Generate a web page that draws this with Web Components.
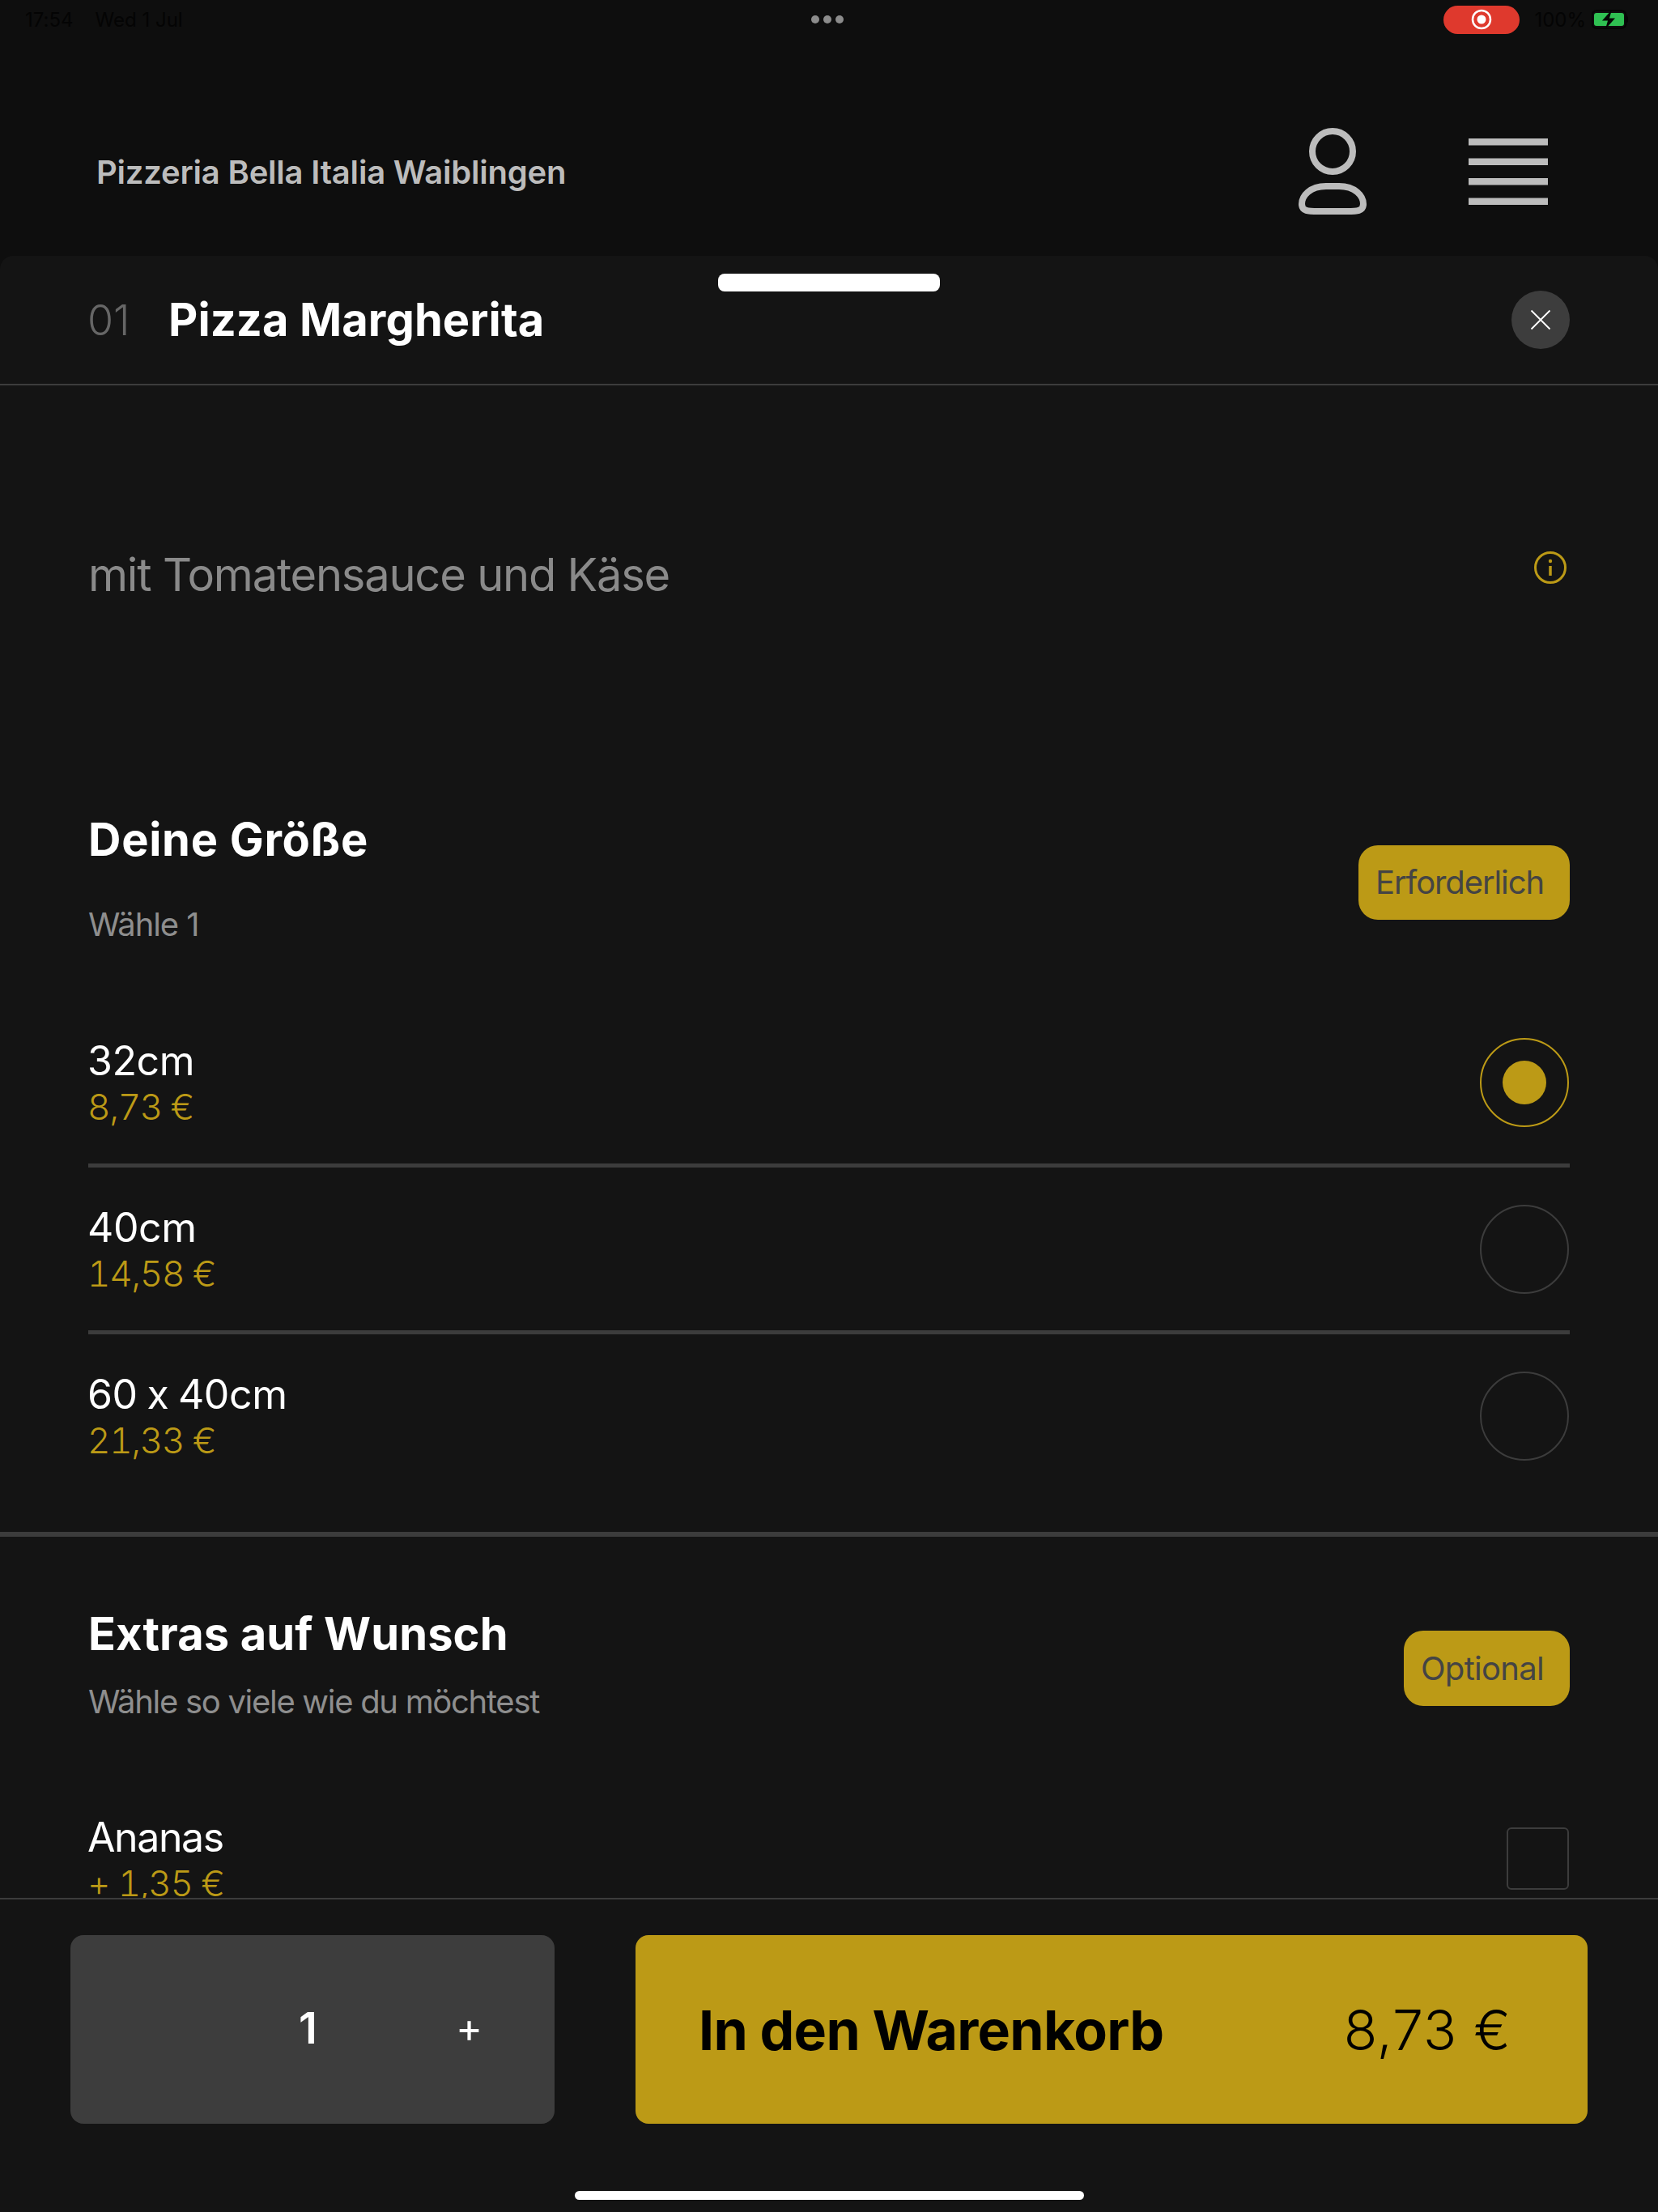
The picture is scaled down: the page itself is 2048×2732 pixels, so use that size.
<!DOCTYPE html>
<html lang="de">
<head>
<meta charset="utf-8">
<title>Pizza Margherita</title>
<style>
    html, body { margin: 0; background: #0e0e0e; }
    body {
        width: 2048px;
        height: 2732px;
        overflow: hidden;
        display: flex;
        flex-direction: column;
        font-family: Inter, "Liberation Sans", sans-serif;
        font-feature-settings: "calt" 0;
    }
</style>
</head>
<body>
<status-bar></status-bar>
<app-header name="Pizzeria Bella Italia Waiblingen"></app-header>
<item-sheet number="01" name="Pizza Margherita">
    <item-description>mit Tomatensauce und Käse</item-description>
    <option-group heading="Deine Größe" hint="Wähle 1" badge="Erforderlich" variant="size">
        <option-row label="32cm" price="8,73 €" kind="radio" checked></option-row>
        <option-row label="40cm" price="14,58 €" kind="radio"></option-row>
        <option-row label="60 x 40cm" price="21,33 €" kind="radio" last></option-row>
    </option-group>
    <option-group heading="Extras auf Wunsch" hint="Wähle so viele wie du möchtest" badge="Optional" variant="extras">
        <option-row label="Ananas" price="+ 1,35 €" kind="check" last></option-row>
    </option-group>
</item-sheet>
<order-bar qty="1" total="8,73 €"></order-bar>

<script>
class StatusBar extends HTMLElement {
    constructor() {
        super();
        this.attachShadow({ mode: "open" });
    }
    connectedCallback() {
        this.shadowRoot.innerHTML = `
            <style>
                :host {
                    display: grid;
                    grid-template-columns: 1fr auto 1fr;
                    align-items: center;
                    height: 48px;
                    flex: none;
                    padding: 0 36px 0 31px;
                    font-size: 24px;
                    color: #040404;
                }
                .left { display: flex; gap: 27px; }
                .dots { display: flex; gap: 5px; }
                .dots i { width: 10px; height: 10px; border-radius: 50%; background: #8c8c8c; }
                .right { display: flex; justify-content: flex-end; align-items: center; }
                .rec {
                    width: 94px;
                    height: 35px;
                    border-radius: 18px;
                    background: #df392d;
                    display: flex;
                    align-items: center;
                    justify-content: center;
                    margin-right: 18px;
                }
                .pct { margin-right: 7px; }
                svg { display: block; }
            </style>
            <div class="left"><span>17:54</span><span>Wed 1 Jul</span></div>
            <div class="dots"><i></i><i></i><i></i></div>
            <div class="right">
                <div class="rec">
                    <svg width="26" height="26" viewBox="0 0 26 26"><circle cx="13" cy="13" r="11" fill="none" stroke="#fff" stroke-width="2.5"/><circle cx="13" cy="13" r="5.5" fill="#fff"/></svg>
                </div>
                <span class="pct">100%</span>
                <svg width="46" height="24" viewBox="0 0 46 24">
                    <rect x="0.5" y="1" width="42" height="22" rx="6" fill="none" stroke="#050505" stroke-width="2"/>
                    <rect x="3" y="4" width="37" height="16" rx="3" fill="#2fc052"/>
                    <path d="M44 8.5v7" stroke="#050505" stroke-width="2"/>
                    <path d="M25 0L13 13.5h7L17 24l12-13.5h-7z" fill="#050505"/>
                </svg>
            </div>
        `;
    }
}
customElements.define("status-bar", StatusBar);

class AppHeader extends HTMLElement {
    constructor() {
        super();
        this.attachShadow({ mode: "open" });
    }
    connectedCallback() {
        this.shadowRoot.innerHTML = `
            <style>
                :host {
                    display: flex;
                    align-items: center;
                    flex: none;
                    height: 268px;
                    padding: 60px 136px 0 119px;
                    box-sizing: border-box;
                    color: #bcbcbc;
                }
                h1 { margin: 0 auto 0 0; font-size: 40px; font-weight: 600; letter-spacing: -0.2px; }
                svg { display: block; }
                .user { margin-right: 126px; }
            </style>
            <h1>${this.getAttribute("name")}</h1>
            <svg class="user" width="84" height="108" viewBox="0 0 84 108" fill="none" stroke="#bcbcbc" stroke-width="8">
                <circle cx="42" cy="29" r="25"/>
                <path d="M24 103H60C72 103 80 103 80 94C80 84 70 72 50 72H34C14 72 4 84 4 94C4 103 12 103 24 103Z"/>
            </svg>
            <svg width="98" height="82" viewBox="0 0 98 82" fill="#bcbcbc">
                <rect width="98" height="8.5"/>
                <rect y="24.5" width="98" height="8.5"/>
                <rect y="49" width="98" height="8.5"/>
                <rect y="73.5" width="98" height="8.5"/>
            </svg>
        `;
    }
}
customElements.define("app-header", AppHeader);

class ItemSheet extends HTMLElement {
    constructor() {
        super();
        this.attachShadow({ mode: "open" });
    }
    connectedCallback() {
        this.shadowRoot.innerHTML = `
            <style>
                :host {
                    display: block;
                    position: relative;
                    flex: none;
                    height: 2028px;
                    background: #141414;
                    border-radius: 16px 16px 0 0;
                    overflow: hidden;
                }
                .handle {
                    position: absolute;
                    left: 887px;
                    top: 22px;
                    width: 274px;
                    height: 22px;
                    border-radius: 8px;
                    background: #fff;
                }
                header {
                    display: flex;
                    align-items: center;
                    height: 158px;
                    padding: 0 109px 0 108px;
                    border-bottom: 2px solid #3c3c3c;
                }
                .num { font-size: 52px; color: #666; font-weight: 300; width: 100px; }
                h2 { margin: 0 auto 0 0; font-size: 56px; font-weight: 700; color: #fff; letter-spacing: 0.1px; }
                .close {
                    width: 72px;
                    height: 72px;
                    border-radius: 50%;
                    background: #3d3d3d;
                    display: flex;
                    align-items: center;
                    justify-content: center;
                }
                svg { display: block; }
            </style>
            <div class="handle"></div>
            <header>
                <span class="num">${this.getAttribute("number")}</span>
                <h2>${this.getAttribute("name")}</h2>
                <div class="close">
                    <svg width="26" height="26" viewBox="0 0 26 26" stroke="#fff" stroke-width="1.8"><path d="M1.5 1.5l23 23M24.5 1.5l-23 23"/></svg>
                </div>
            </header>
            <slot></slot>
        `;
    }
}
customElements.define("item-sheet", ItemSheet);

class ItemDescription extends HTMLElement {
    constructor() {
        super();
        this.attachShadow({ mode: "open" });
    }
    connectedCallback() {
        this.shadowRoot.innerHTML = `
            <style>
                :host {
                    display: flex;
                    justify-content: space-between;
                    align-items: center;
                    height: 464px;
                    padding: 0 109px;
                }
                p { margin: 3px 0 0; font-size: 56px; color: #8a8a8a; letter-spacing: -1.2px; }
                svg { display: block; margin: 0 4px 15px 0; }
            </style>
            <p><slot></slot></p>
            <svg width="40" height="40" viewBox="0 0 40 40" fill="none" stroke="#bc9a16">
                <circle cx="20" cy="20" r="18.5" stroke-width="3"/>
                <path d="M20 18v12" stroke-width="3.5"/>
                <circle cx="20" cy="12" r="2.2" fill="#bc9a16" stroke="none"/>
            </svg>
        `;
    }
}
customElements.define("item-description", ItemDescription);

class OptionGroup extends HTMLElement {
    constructor() {
        super();
        this.attachShadow({ mode: "open" });
    }
    connectedCallback() {
        const extras = this.getAttribute("variant") === "extras";
        this.shadowRoot.innerHTML = `
            <style>
                :host {
                    display: block;
                    border-bottom: ${extras ? "0" : "6px solid #3c3c3c"};
                }
                .top {
                    display: flex;
                    justify-content: space-between;
                    align-items: flex-start;
                    padding: ${extras ? "86px" : "63px"} 109px 0;
                    height: ${extras ? "297px" : "296px"};
                    box-sizing: border-box;
                }
                h3 { margin: 0; font-size: 56px; font-weight: 700; color: #fff; line-height: 68px; letter-spacing: ${extras ? "0.1px" : "0.7px"}; }
                p { margin: ${extras ? "26px" : "47px"} 0 0; font-size: 40px; color: #8e8e8e; line-height: 48px; letter-spacing: ${extras ? "-1.3px" : "-1.1px"}; }
                .badge {
                    font-size: 40px;
                    line-height: 48px;
                    color: #444;
                    background: #bc9a16;
                    border-radius: 24px;
                    letter-spacing: ${extras ? "-0.7px" : "-1.1px"};
                    padding: ${extras ? "23px" : "22px"} 32px 22px 21px;
                    margin-top: ${extras ? "30px" : "41px"};
                }
                .rows { padding: 0 109px; }
            </style>
            <div class="top">
                <div>
                    <h3>${this.getAttribute("heading")}</h3>
                    <p>${this.getAttribute("hint")}</p>
                </div>
                <span class="badge">${this.getAttribute("badge")}</span>
            </div>
            <div class="rows"><slot></slot></div>
        `;
    }
}
customElements.define("option-group", OptionGroup);

class OptionRow extends HTMLElement {
    constructor() {
        super();
        this.attachShadow({ mode: "open" });
    }
    connectedCallback() {
        const isRadio = this.getAttribute("kind") === "radio";
        const checked = this.hasAttribute("checked");
        const last = this.hasAttribute("last");
        this.shadowRoot.innerHTML = `
            <style>
                :host {
                    display: flex;
                    justify-content: space-between;
                    align-items: flex-start;
                    height: ${last ? "244px" : "201px"};
                    border-bottom: ${last ? "0" : "5px solid #3c3c3c"};
                }
                .text { padding-top: 46px; margin-left: -1px; }
                .label {
                    font-size: 50px;
                    line-height: 56px;
                    color: #fff;
                    letter-spacing: ${isRadio ? "-0.4px" : "-1.4px"};
                    word-spacing: ${isRadio ? "-2px" : "0"};
                }
                .price {
                    font-size: 44px;
                    font-weight: 300;
                    line-height: 50px;
                    margin-top: 4px;
                    color: #bc9a16;
                    font-variant-numeric: tabular-nums;
                    letter-spacing: -1.3px;
                }
                .radio {
                    width: 110px;
                    height: 110px;
                    box-sizing: border-box;
                    border-radius: 50%;
                    border: 2px solid ${checked ? "#bc9a16" : "#3c3c3c"};
                    display: flex;
                    align-items: center;
                    justify-content: center;
                    margin: 46px 1px 0 0;
                }
                .radio i { width: 54px; height: 54px; border-radius: 50%; background: #bc9a16; }
                .check {
                    width: 77px;
                    height: 77px;
                    box-sizing: border-box;
                    border: 2px solid #3c3c3c;
                    border-radius: 6px;
                    margin: 62px 1px 0 0;
                }
            </style>
            <div class="text">
                <div class="label">${this.getAttribute("label")}</div>
                <div class="price">${this.getAttribute("price")}</div>
            </div>
            ${isRadio
                ? `<div class="radio">${checked ? "<i></i>" : ""}</div>`
                : `<div class="check"></div>`}
        `;
    }
}
customElements.define("option-row", OptionRow);

class OrderBar extends HTMLElement {
    constructor() {
        super();
        this.attachShadow({ mode: "open" });
    }
    connectedCallback() {
        this.shadowRoot.innerHTML = `
            <style>
                :host {
                    display: block;
                    flex: none;
                    height: 388px;
                    box-sizing: border-box;
                    background: #141414;
                    border-top: 2px solid #3c3c3c;
                    padding: 44px 87px 0;
                }
                .row { display: flex; justify-content: space-between; height: 233px; }
                .qty {
                    width: 598px;
                    background: #3d3d3d;
                    border-radius: 16px;
                    display: grid;
                    grid-template-columns: 282px 34px 160px auto;
                    align-items: center;
                    color: #fff;
                }
                .qty b { grid-column: 2; font-size: 54px; font-weight: 600; margin-top: -4px; }
                .qty span { grid-column: 4; font-size: 50px; margin-top: -5px; }
                .add {
                    width: 1176px;
                    box-sizing: border-box;
                    background: #bc9a16;
                    border-radius: 16px;
                    display: flex;
                    justify-content: space-between;
                    align-items: center;
                    padding: 0 94px 0 78px;
                    color: #000;
                    font-size: 68px;
                }
                .add b { font-weight: 700; letter-spacing: -0.7px; }
                .add span { font-weight: 300; letter-spacing: 1px; }
                .home {
                    width: 629px;
                    height: 11px;
                    border-radius: 6px;
                    background: #fff;
                    margin: 83px auto 0;
                }
            </style>
            <div class="row">
                <div class="qty"><b>${this.getAttribute("qty")}</b><span>+</span></div>
                <div class="add"><b>In den Warenkorb</b><span>${this.getAttribute("total")}</span></div>
            </div>
            <div class="home"></div>
        `;
    }
}
customElements.define("order-bar", OrderBar);
</script>
</body>
</html>
